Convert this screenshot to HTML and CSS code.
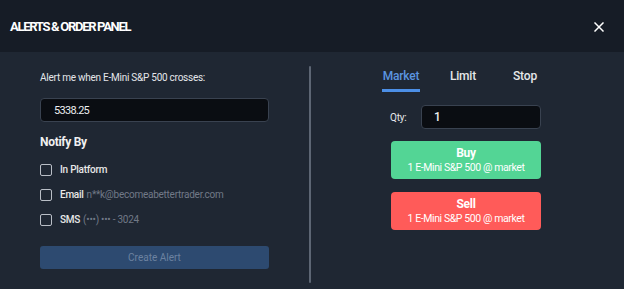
FILE: index.html
```html
<!DOCTYPE html>
<html>
<head>
<meta charset="utf-8">
<link rel="stylesheet" href="styles.css">
</head>
<body>
<div class="modal">
  <div class="header">
    <div class="title">ALERTS &amp; ORDER PANEL</div>
    <svg class="close" width="10" height="10" viewBox="0 0 10 10"><path d="M1 1L9 9M9 1L1 9" stroke="#ffffff" stroke-width="1.5" stroke-linecap="square"/></svg>
  </div>
  <div class="content">
    <div class="left">
      <div class="label">Alert me when E-Mini S&amp;P 500 crosses:</div>
      <div class="input wide">5338.25</div>
      <div class="notify">Notify By</div>
      <div class="row"><span class="cb"></span><span class="opt">In Platform</span></div>
      <div class="row"><span class="cb"></span><span class="opt">Email</span><span class="muted">n**k@becomeabettertrader.com</span></div>
      <div class="row"><span class="cb"></span><span class="opt">SMS</span><span class="muted">(•••) ••• - 3024</span></div>
      <div class="create">Create Alert</div>
    </div>
    <div class="divider"></div>
    <div class="right">
      <div class="tabs">
        <div class="tab"><span class="tab-text active">Market</span></div>
        <div class="tab"><span class="tab-text">Limit</span></div>
        <div class="tab"><span class="tab-text">Stop</span></div>
      </div>
      <div class="qty">
        <span class="qty-label">Qty:</span>
        <div class="input small">1</div>
      </div>
      <div class="btn buy"><div class="btn-main">Buy</div><div class="btn-sub">1 E-Mini S&amp;P 500 @ market</div></div>
      <div class="btn sell"><div class="btn-main">Sell</div><div class="btn-sub">1 E-Mini S&amp;P 500 @ market</div></div>
    </div>
  </div>
</div>
</body>
</html>
```
FILE: styles.css
```css
* { box-sizing: border-box; }
html, body { margin: 0; padding: 0; background: #1f2733; }
body { font-family: Roboto, "Liberation Sans", sans-serif; color: #e8e8e8; }
.modal { width: 624px; height: 289px; background: #1f2733; overflow: hidden; }
.header {
  height: 52px; background: #161c26; display: flex; align-items: center;
  justify-content: space-between; padding: 0 20px 0 10px;
}
.title { font-weight: 700; font-size: 13px; color: #ffffff; letter-spacing: -1.3px; }
.close { display: block; margin-top: 1px; }
.content { display: flex; height: 237px; }
.left { width: 269px; padding: 19px 0 0 40px; }
.label { font-size: 10px; line-height: 14px; color: #e4e6ea; letter-spacing: -0.25px; }
.input {
  height: 24px; background: #0a0d12; border: 1px solid #394250; border-radius: 4px;
  font-size: 11px; color: #eceef0; display: flex; align-items: center;
}
.input.wide { margin-top: 13px; width: 229px; padding-left: 13px; letter-spacing: -0.7px; }
.notify { margin-top: 12px; font-size: 12px; font-weight: 700; line-height: 16px; color: #f0f0f0; letter-spacing: -0.3px; }
.row { height: 25px; display: flex; align-items: center; font-size: 10px; letter-spacing: -0.25px; }
.notify + .row { margin-top: 7px; }
.cb { width: 12px; height: 12px; border: 1.5px solid #b9bec6; border-radius: 2px; margin-right: 8px; }
.opt { font-weight: 500; color: #e8e8e8; margin-right: 3px; }
.muted { color: #717987; }
.create {
  margin-top: 14px; width: 229px; height: 23px; background: #2d4a70; border-radius: 3px;
  font-size: 10px; color: #6c82a0; display: flex; align-items: center; justify-content: center;
}
.divider { width: 2px; margin: 14px 0 6px 40px; background: #5d6674; border-radius: 1px; }
.right { padding: 17px 0 0 80px; }
.tabs { display: flex; margin-left: -21px; }
.tab { width: 62px; display: flex; justify-content: center; }
.tab-text { font-size: 12px; font-weight: 500; line-height: 14px; padding: 0 1px 6px; border-bottom: 3px solid transparent; color: #e6e8ea; letter-spacing: -0.2px; }
.tab-text.active { color: #5b95e0; border-bottom-color: #4c8fe6; }
.qty { margin-top: 13px; display: flex; align-items: center; }
.qty-label { font-size: 10px; color: #e6e8ea; width: 31px; letter-spacing: -0.2px; margin-left: -1px; }
.input.small { width: 120px; padding-left: 12px; font-weight: 500; font-size: 12px; }
.btn {
  width: 150px; height: 38px; border-radius: 4px; display: flex; flex-direction: column;
  align-items: center; justify-content: center; color: #ffffff;
}
.buy { margin-top: 12px; background: #53d595; }
.sell { margin-top: 13px; background: #ff5b59; }
.btn-main { font-size: 12px; font-weight: 700; line-height: 15px; letter-spacing: -0.3px; }
.btn-sub { font-size: 10.5px; line-height: 14px; letter-spacing: -0.4px; }
```
